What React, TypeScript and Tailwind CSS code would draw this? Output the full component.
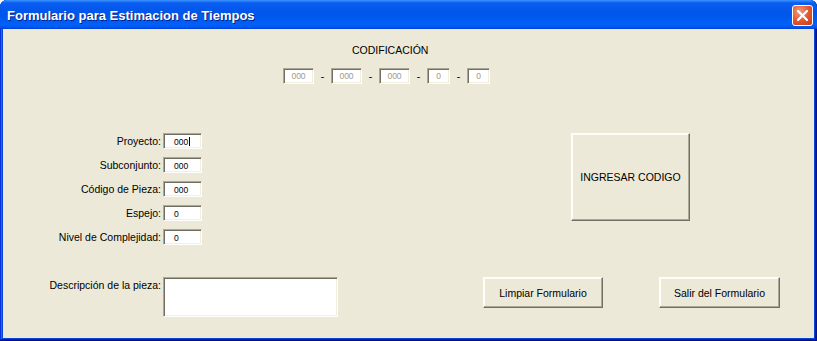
const sunken =
  'border border-t-[#aca899] border-l-[#aca899] border-b-white border-r-white shadow-[inset_1px_1px_0_#716f64,inset_-1px_-1px_0_#f1efe2] bg-white';
const raised =
  'border border-t-white border-l-white border-b-[#716f64] border-r-[#716f64] shadow-[inset_-1px_-1px_0_#aca899,inset_1px_1px_0_#fdfcf8] bg-[#ece9d8] flex items-center justify-center text-black';

const codeBoxes = [
  { w: 'w-[31px]', v: '000' },
  { w: 'w-[31px]', v: '000' },
  { w: 'w-[31px]', v: '000' },
  { w: 'w-[23px]', v: '0' },
  { w: 'w-[23px]', v: '0' },
];

const fields = [
  { label: 'Proyecto:', value: '000', caret: true },
  { label: 'Subconjunto:', value: '000' },
  { label: 'Código de Pieza:', value: '000' },
  { label: 'Espejo:', value: '0' },
  { label: 'Nivel de Complejidad:', value: '0' },
];

function CloseIcon() {
  return (
    <svg width="11" height="11" viewBox="0 0 11 11">
      <path d="M1 1L10 10M10 1L1 10" stroke="white" strokeWidth="2.2" strokeLinecap="square" />
    </svg>
  );
}

export default function App() {
  return (
    <div className="w-[817px] h-[341px] bg-white font-['Liberation_Sans',Arial,sans-serif]">
      <div className="w-full h-full flex flex-col rounded-t-[7px] overflow-hidden bg-[#0846d8] shadow-[inset_-1px_-1px_0_#00138c,inset_1px_1px_0_#0831d9,inset_-2px_-2px_0_#001ea0,inset_2px_2px_0_#166aee]">
        {/* Title bar */}
        <div className="h-[29px] flex-shrink-0 flex items-start justify-between pl-[7px] pr-[4px] bg-[linear-gradient(to_bottom,#3d95ff,#0a5df0_10%,#0055ea_45%,#0060f8_85%,#0058ee_93%,#003dd7_100%)]">
          <div className="pt-[8px] text-white font-bold text-[13px] leading-[15px] [text-shadow:1px_1px_0_#0a1e8a]">
            Formulario para Estimacion de Tiempos
          </div>
          <div className="mt-[5px] w-[21px] h-[21px] rounded-[3px] border border-white flex items-center justify-center bg-[radial-gradient(circle_at_35%_30%,#f39b7c,#e0542f_55%,#c73a16)]">
            <CloseIcon />
          </div>
        </div>

        {/* Body */}
        <div className="flex-1 mx-[3px] mb-[3px] bg-[#ece9d8] text-[10.5px] leading-[12px] text-black flex flex-col">
          <div className="mt-[15px] ml-[349px]">CODIFICACIÓN</div>

          <div className="mt-[12px] ml-[280px] flex items-center">
            {codeBoxes.map((b, i) => (
              <div key={i} className="flex items-center">
                {i > 0 && <span className="w-[17px] text-center">-</span>}
                <div className={`${b.w} h-[16px] ${sunken} text-[8.5px] leading-[14px] text-[#9d9a8c] text-center`}>
                  {b.v}
                </div>
              </div>
            ))}
          </div>

          {/* Fields + main button */}
          <div className="mt-[49px] flex items-start">
            <div className="w-[568px] flex flex-col gap-[8px]">
              {fields.map(f => (
                <div key={f.label} className="flex items-center">
                  <span className="w-[158px] text-right">{f.label}</span>
                  <div className={`ml-[2px] w-[39px] h-[16px] ${sunken} pl-[10px] pt-[3px] text-[8.5px] leading-[10px] flex items-start`}>
                    {f.value}
                    {f.caret && <span className="ml-[1px] w-[1px] h-[9px] bg-black" />}
                  </div>
                </div>
              ))}
            </div>
            <div className={`w-[119px] h-[88px] ${raised}`}>INGRESAR CODIGO</div>
          </div>

          {/* Description + buttons */}
          <div className="mt-[32px] flex items-start">
            <span className="w-[158px] text-right pt-[2px]">Descripción de la pieza:</span>
            <div className={`ml-[2px] w-[175px] h-[40px] ${sunken}`} />
            <div className={`ml-[145px] w-[120px] h-[31px] ${raised}`}>Limpiar Formulario</div>
            <div className={`ml-[56px] w-[121px] h-[31px] ${raised}`}>Salir del Formulario</div>
          </div>
        </div>
      </div>
    </div>
  );
}
